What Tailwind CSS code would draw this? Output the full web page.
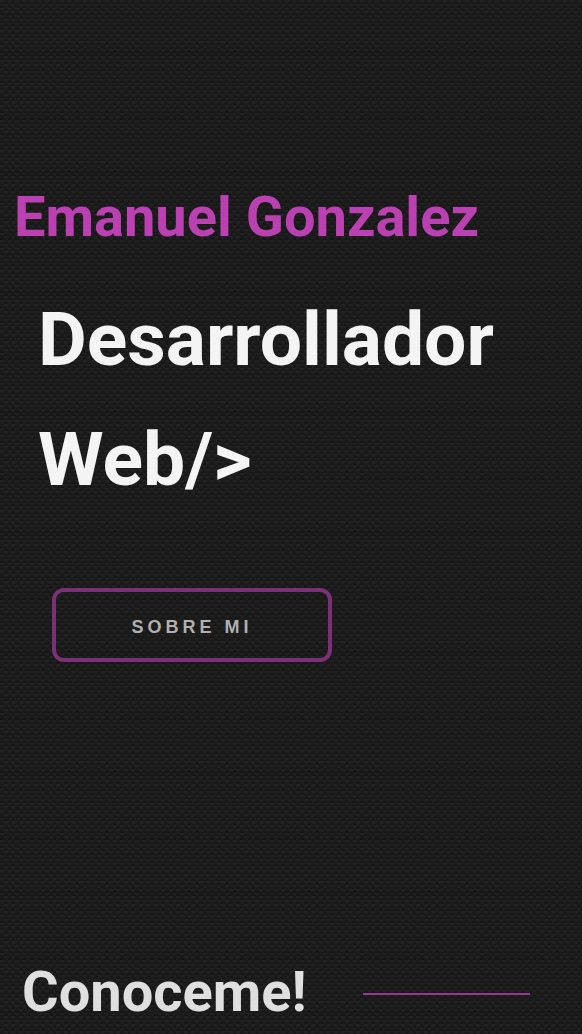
<!DOCTYPE html>
<html lang="es">
<head>
<meta charset="utf-8">
<meta name="viewport" content="width=device-width, initial-scale=1">
<title>Emanuel Gonzalez</title>
<script src="https://cdn.jsdelivr.net/npm/@tailwindcss/browser@4"></script>
</head>
<body class="relative isolate min-h-screen overflow-x-hidden bg-[#1b1b1b] font-['Roboto',sans-serif]">
  <!-- Woven carbon texture -->
  <svg class="absolute inset-0 -z-10 h-full w-full" aria-hidden="true">
    <defs>
      <linearGradient id="cell" x1="0" y1="0" x2="0" y2="1">
        <stop offset="0" stop-color="#242424"/>
        <stop offset="1" stop-color="#1a1a1a"/>
      </linearGradient>
      <linearGradient id="gap" x1="0" y1="0" x2="0" y2="1">
        <stop offset="0" stop-color="#1c1c1c"/>
        <stop offset="1" stop-color="#161616"/>
      </linearGradient>
      <pattern id="weave" width="15" height="15" patternUnits="userSpaceOnUse">
        <path fill="url(#gap)" d="M0 0h15v4H0z"/>
        <path fill="url(#gap)" d="M0 4h15v4H0z"/>
        <path fill="url(#gap)" d="M0 8h15v3H0z"/>
        <path fill="url(#gap)" d="M0 11h15v4H0z"/>
        <path fill="url(#cell)" d="M0 0h4v4H0zM8 0h3v4H8z"/>
        <path fill="url(#cell)" d="M4 4h4v4H4zM11 4h4v4h-4z"/>
        <path fill="url(#cell)" d="M0 8h4v3H0zM8 8h3v3H8z"/>
        <path fill="url(#cell)" d="M4 11h4v4H4zM11 11h4v4h-4z"/>
      </pattern>
    </defs>
    <rect width="100%" height="100%" fill="url(#weave)"/>
  </svg>
  <main>
    <section class="pt-[177px]">
      <h1 class="pl-[14px] text-[56px] leading-20 font-bold text-[#bb40b2]">Emanuel Gonzalez</h1>
      <h2 class="mt-[22px] pl-[38px] text-[75px] leading-[120px] font-bold text-[#f4f4f4]">Desarrollador<br>Web/&gt;</h2>
      <button type="button" class="mt-[69px] ml-13 block h-[74px] w-70 rounded-xl border-4 border-[#7b3077] pt-1 font-['Liberation_Sans',sans-serif] text-lg font-bold tracking-[4px] text-[#b0b0b0]">SOBRE MI</button>
    </section>
    <section class="mt-[290px] flex h-20 items-center pl-[22px]">
      <h2 class="text-[56px] leading-20 font-bold text-[#dfdfdf]">Conoceme!</h2>
      <hr class="mt-1 mr-13 ml-14 grow border-t-2 border-[#953a91]">
    </section>
  </main>
</body>
</html>
